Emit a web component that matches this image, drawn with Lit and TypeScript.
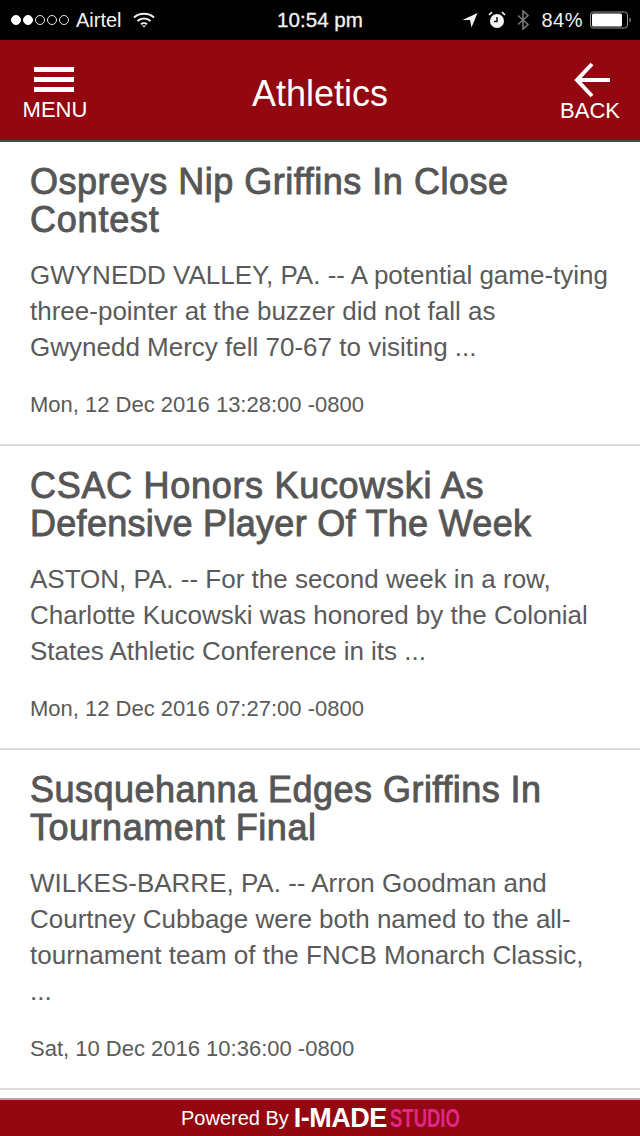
import { LitElement, html, css } from "lit";
import { customElement } from "lit/decorators.js";

type Line = [string, number];

const items: { t: Line[]; b: string[]; d: string }[] = [
  { t: [["Ospreys Nip Griffins In Close", 0.52], ["Contest", 0.8]], b: ["GWYNEDD VALLEY, PA. -- A potential game-tying", "three-pointer at the buzzer did not fall as", "Gwynedd Mercy fell 70-67 to visiting ..."], d: "Mon, 12 Dec 2016 13:28:00 -0800" },
  { t: [["CSAC Honors Kucowski As", 0.7], ["Defensive Player Of The Week", 0.3]], b: ["ASTON, PA. -- For the second week in a row,", "Charlotte Kucowski was honored by the Colonial", "States Athletic Conference in its ..."], d: "Mon, 12 Dec 2016 07:27:00 -0800" },
  { t: [["Susquehanna Edges Griffins In", 0.48], ["Tournament Final", 0.52]], b: ["WILKES-BARRE, PA. -- Arron Goodman and", "Courtney Cubbage were both named to the all-", "tournament team of the FNCB Monarch Classic,", "..."], d: "Sat, 10 Dec 2016 10:36:00 -0800" },
];

@customElement("app-root")
export class AppRoot extends LitElement {
  static styles = css`
    :host { display: block; width: 640px; height: 1136px; font-family: "Liberation Sans", Arial, sans-serif; background: #fff; overflow: hidden; }
    .page { display: flex; flex-direction: column; height: 1136px; }
    .status { height: 40px; background: #000; color: #f2f2f2; display: flex; align-items: center; justify-content: space-between; padding: 0 8px 0 11px; font-size: 20px; position: relative; flex: none; }
    .left, .right { display: flex; align-items: center; }
    .dots { display: flex; gap: 2px; margin-right: 7px; }
    .dot { width: 10px; height: 10px; border-radius: 50%; border: 1px solid #e8e8e8; box-sizing: border-box; }
    .dot.on { background: #fff; border-color: #fff; }
    .wifi { margin-left: 11px; }
    .time { position: absolute; left: 0; right: 0; text-align: center; font-size: 20.6px; -webkit-text-stroke: 0.3px #f2f2f2; pointer-events: none; }
    .loc { margin-right: 10px; }
    .alarm { margin-right: 10px; }
    .bt { margin-right: 11px; }
    .pct { margin-right: 7px; letter-spacing: 0.5px; }
    .bar { height: 100px; background: #920710; color: #fff; display: grid; grid-template-columns: 110px 1fr 110px; align-items: stretch; flex: none; }
    .btn { display: flex; flex-direction: column; align-items: center; font-size: 22px; line-height: 24px; }
    .btn.menu { padding-top: 27px; }
    .btn.back { padding-top: 22px; padding-left: 10px; }
    .burger { width: 40px; height: 25px; display: flex; flex-direction: column; justify-content: space-between; margin-bottom: 6px; margin-right: 2px; }
    .burger i { display: block; height: 5px; background: #fff; }
    .backicon { margin-bottom: 1px; display: block; margin-left: 4px; }
    .title { text-align: center; font-size: 36px; line-height: 100px; margin-top: 4px; }
    .shade { height: 2px; background: #4a4a4a; flex: none; }
    .list { flex: 1; min-height: 0; overflow: hidden; }
    .item { border-bottom: 2px solid #dddddd; padding: 21px 30px 0; color: #5a5a5a; }
    h2 { margin: 0; font-size: 36px; line-height: 38px; font-weight: 400; color: #565656; -webkit-text-stroke: 0.9px #565656; }
    p { margin: 18px 0 0; font-size: 26px; line-height: 36px; }
    .date { font-size: 22px; line-height: 26px; margin-top: 27px; padding-bottom: 26px; }
    .foot { height: 38px; box-sizing: border-box; border-top: 2px solid #aaa; background: #920710; color: #fff; display: flex; align-items: center; padding-left: 181px; font-size: 20px; flex: none; }
    .imade { font-weight: 700; font-size: 27px; letter-spacing: -0.5px; margin-left: 5px; }
    .studio { color: #e2268a; font-weight: 700; font-size: 25px; margin-left: 3px; display: inline-block; transform: scaleX(0.74); transform-origin: left; width: 70px; white-space: nowrap; }
  `;

  render() {
    return html`<div class="page">
      <div class="status">
        <div class="left">
          <div class="dots">${[1, 1, 0, 0, 0].map((o) => html`<span class="dot ${o ? "on" : ""}"></span>`)}</div>
          <span>Airtel</span>
          <svg class="wifi" width="22" height="16" viewBox="0 0 22 16" fill="none" stroke="#f2f2f2" stroke-width="2">
            <path d="M1 5.5C6.5 0.5 15.5 0.5 21 5.5" />
            <path d="M4.5 9C8 5.8 14 5.8 17.5 9" />
            <path d="M8 12.2C9.6 10.8 12.4 10.8 14 12.2" />
            <path d="M9 13.4L11 15.6L13 13.4Z" fill="#f2f2f2" stroke="none" />
          </svg>
        </div>
        <div class="time">10:54 pm</div>
        <div class="right">
          <svg class="loc" width="16" height="16" viewBox="0 0 16 16"><path d="M0.5 8L15.5 1L9.5 15.5L8 8Z" fill="#f2f2f2" /></svg>
          <svg class="alarm" width="18" height="18" viewBox="0 0 18 18">
            <circle cx="9" cy="10" r="7" fill="#f5f5f5" />
            <path d="M9 6V10.5H6" stroke="#111" stroke-width="1.5" fill="none" />
            <path d="M1 4L4 1.2M17 4L14 1.2" stroke="#f5f5f5" stroke-width="1.6" />
          </svg>
          <svg class="bt" width="14" height="20" viewBox="0 0 14 20" fill="none" stroke="#777" stroke-width="1.6">
            <path d="M2 5.5L12 14.5L7 19V1L12 5.5L2 14.5" />
          </svg>
          <span class="pct">84%</span>
          <svg width="42" height="18" viewBox="0 0 42 18">
            <rect x="0.5" y="1" width="37" height="16" rx="3" fill="none" stroke="#999" />
            <rect x="2" y="2.5" width="30" height="13" rx="1.5" fill="#fff" />
            <path d="M39.5 6.5C41.3 7 41.3 11 39.5 11.5Z" fill="#999" />
          </svg>
        </div>
      </div>
      <div class="bar">
        <div class="btn menu">
          <div class="burger"><i></i><i></i><i></i></div>
          <span>MENU</span>
        </div>
        <div class="title">Athletics</div>
        <div class="btn back">
          <svg class="backicon" width="38" height="36" viewBox="0 0 38 36" fill="none" stroke="#fff" stroke-width="4">
            <path d="M37 18H4" />
            <path d="M19 2L4 18L19 34" />
          </svg>
          <span>BACK</span>
        </div>
      </div>
      <div class="shade"></div>
      <div class="list">
        ${items.map(
          (i) => html`<div class="item">
            <h2>${i.t.map(([l, s]) => html`<div style="letter-spacing:${s}px">${l}</div>`)}</h2>
            <p>${i.b.map((l) => html`<div>${l}</div>`)}</p>
            <div class="date">${i.d}</div>
          </div>`
        )}
      </div>
      <div class="foot">
        <span>Powered By</span>
        <span class="imade">I-MADE</span>
        <span class="studio">STUDIO</span>
      </div>
    </div>`;
  }
}
